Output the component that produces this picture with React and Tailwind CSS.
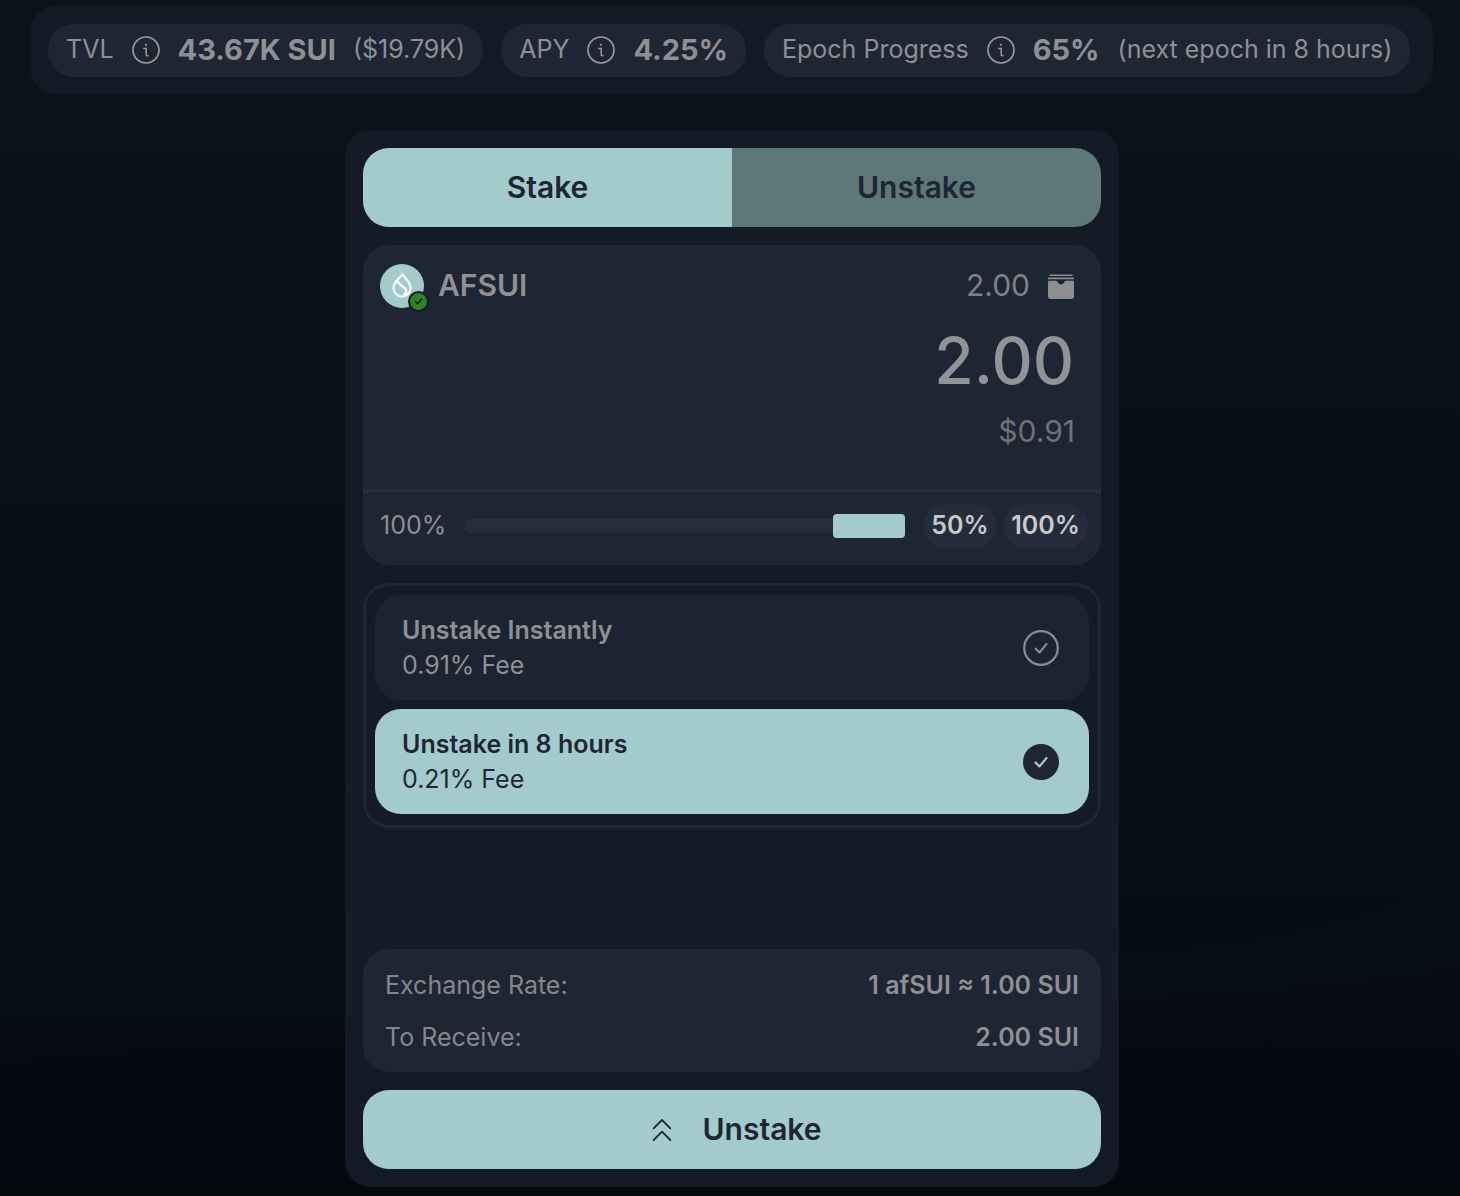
import { ChevronsUp } from 'lucide-react';

const font = { fontFamily: 'Inter, "Liberation Sans", sans-serif' };

function InfoIcon() {
  return (
    <svg width="28" height="28" viewBox="0 0 28 28" fill="none" stroke="#9a9a9c" className="shrink-0">
      <circle cx="14" cy="14" r="13" strokeWidth="1.7" />
      <circle cx="14" cy="8.8" r="1.1" fill="#9a9a9c" stroke="none" />
      <path d="M11.8 12.4h2.4v6.2c0 1 .6 1.4 1.8 1.2" strokeWidth="1.5" strokeLinecap="round" />
    </svg>
  );
}

function Stat({ children }) {
  return (
    <div className="flex h-[53px] items-center gap-[18px] rounded-[26px] bg-[#1f2633] px-[18px] text-[25px] text-[#8f9094]">
      {children}
    </div>
  );
}

function WalletIcon() {
  return (
    <svg width="30" height="28" viewBox="0 0 30 28" fill="none" className="shrink-0">
      <path d="M4 3.2h22" stroke="#8d8e90" strokeWidth="1.6" strokeLinecap="round" />
      <path d="M2.6 6.4h24.8" stroke="#8d8e90" strokeWidth="1.6" strokeLinecap="round" />
      <path
        d="M3.5 8.8h6c1.2 0 1.8.6 2.4 1.6.7 1.2 1.7 2 3.1 2s2.4-.8 3.1-2c.6-1 1.2-1.6 2.4-1.6h6c1 0 1.5.5 1.5 1.5v14.2c0 1.6-1 2.5-2.5 2.5H4.500c-1.500 0-2.500-.9-2.500-2.500V10.300c0-1 .5-1.500 1.500-1.500z"
        fill="#8d8e90"
      />
    </svg>
  );
}

function TokenIcon() {
  return (
    <div className="relative h-[44px] w-[44px] shrink-0 rounded-full bg-[#a4cbcb]">
      <svg width="44" height="44" viewBox="0 0 44 44" fill="none" stroke="#fff" strokeWidth="2.2" className="absolute left-0 top-0">
        <path d="M22.500 10.500c4.500 4.800 8 8.700 8 13.500a8.500 8.500 0 0 1-17 0c0-3 1.600-5.500 3.500-7.700z" />
        <path d="M17.300 17.200c1.500 4 7.200 5 8.700 8.800.5 1.400-.1 3.800-2.300 5.300" />
      </svg>
      <div className="absolute bottom-[-4px] right-[-5px] flex h-[21px] w-[21px] items-center justify-center rounded-full border-2 border-[#141c29] bg-[#2f8324]">
        <svg width="11" height="11" viewBox="0 0 11 11" fill="none" stroke="#10202a" strokeWidth="1.500" strokeLinecap="round" strokeLinejoin="round">
          <path d="M2.500 5.800l2 2 4-4.500" />
        </svg>
      </div>
    </div>
  );
}

function Option({ title, fee, active }) {
  return (
    <div
      className={`flex h-[105px] items-center justify-between rounded-[26px] pl-[27px] pr-[30px] ${
        active ? 'bg-[#a4cbcb] text-[#1e2635]' : 'bg-[#1d2431] text-[#8f9094]'
      }`}
    >
      <div className="flex flex-col gap-[3px]">
        <div className="text-[25px] font-semibold leading-[32px]">{title}</div>
        <div className="text-[25px] leading-[32px]">{fee}</div>
      </div>
      {active ? (
        <svg width="36" height="36" viewBox="0 0 36 36" fill="none">
          <circle cx="18" cy="18" r="18" fill="#1e2635" />
          <path d="M12.500 18.500l4 4 7-8.500" stroke="#a4cbcb" strokeWidth="2.200" strokeLinecap="round" strokeLinejoin="round" />
        </svg>
      ) : (
        <svg width="36" height="36" viewBox="0 0 36 36" fill="none" stroke="#8a8b8f">
          <circle cx="18" cy="18" r="16.800" strokeWidth="2.200" />
          <path d="M12.500 18.500l4 4 7-8.500" strokeWidth="2" strokeLinecap="round" strokeLinejoin="round" />
        </svg>
      )}
    </div>
  );
}

function Background() {
  return (
    <svg width="1460" height="1196" viewBox="0 0 1460 1196" fill="none" className="absolute left-0 top-0">
      <path d="M0 370c160 20 300 20 460 20s700 200 1000 240V1196H0z" fill="#ffffff" fillOpacity="0.006" />
      <path d="M0 738c220 20 480 90 700 150s520 110 760-10V1196H0z" fill="#ffffff" fillOpacity="0.006" />
      <path d="M0 1060c260-30 520-20 760-40s460-10 700-50v226H0z" fill="#000000" fillOpacity="0.12" />
    </svg>
  );
}

export default function App() {
  return (
    <div style={font} className="relative h-[1196px] w-[1460px] overflow-hidden bg-gradient-to-b from-[#0c131c] to-[#03090f]">
      <Background />
      <div className="relative flex flex-col items-center pt-[6px]">
        <div className="ml-[3px] flex h-[88px] w-[1403px] items-center gap-[18px] rounded-[26px] bg-[#131a25] px-[18px]">
          <Stat>
            <span>TVL</span>
            <InfoIcon />
            <span className="text-[29px] font-bold">43.67K SUI</span>
            <span className="-ml-[1px]">($19.79K)</span>
          </Stat>
          <Stat>
            <span>APY</span>
            <InfoIcon />
            <span className="text-[29px] font-bold">4.25%</span>
          </Stat>
          <Stat>
            <span>Epoch Progress</span>
            <InfoIcon />
            <span className="text-[29px] font-bold">65%</span>
            <span>(next epoch in 8 hours)</span>
          </Stat>
        </div>

        <div className="ml-[4px] mt-[36px] flex w-[774px] flex-col rounded-[26px] bg-[#141a26] p-[18px]">
          <div className="flex h-[79px] overflow-hidden rounded-[26px] text-[30px] font-semibold text-[#1e2635]">
            <div className="flex w-[369px] items-center justify-center bg-[#a4cbcb]">Stake</div>
            <div className="flex flex-1 items-center justify-center bg-[#5e7777]">Unstake</div>
          </div>

          <div className="mt-[18px] h-[320px] rounded-[26px] bg-[#1e2533]">
            <div className="flex h-[248px] flex-col border-b-[4px] border-[#252e3e] px-[17px] pt-[18px]">
              <div className="flex items-center justify-between pr-[8px]">
                <div className="flex items-center gap-[14px]">
                  <TokenIcon />
                  <span className="text-[30px] font-semibold text-[#909194]">AFSUI</span>
                </div>
                <div className="flex items-center gap-[16px] text-[30px] text-[#808185]">
                  <span>2.00</span>
                  <WalletIcon />
                </div>
              </div>
              <div className="mt-[14px] pr-[10px] text-right text-[64px] font-medium leading-[78px] text-[#929396]">2.00</div>
              <div className="mt-[13px] pr-[9px] text-right text-[30px] leading-[36px] text-[#717276]">$0.91</div>
            </div>
            <div className="flex h-[68px] items-center pb-[2px] pl-[17px] pr-[13px]">
              <span className="w-[84px] text-[25px] text-[#8f9094]">100%</span>
              <div className="relative h-[14px] w-[441px] rounded-full bg-[#252e3e]">
                <div className="absolute right-0 top-[-5px] h-[24px] w-[72px] rounded-[4px] bg-[#a4cbcb]" />
              </div>
              <div className="ml-[18px] flex h-[44px] w-[50px] flex-1 items-center justify-center rounded-[22px] bg-[#252d3c] text-[25px] font-semibold text-[#c9c9ca]">50%</div>
              <div className="ml-[6px] flex h-[44px] w-[85px] items-center justify-center rounded-[22px] bg-[#252d3c] text-[25px] font-semibold text-[#c9c9ca]">100%</div>
            </div>
          </div>

          <div className="mt-[18px] flex h-[245px] flex-col gap-[9px] rounded-[26px] border-[3px] border-[#1e2533] p-[9px]">
            <Option title="Unstake Instantly" fee="0.91% Fee" />
            <Option title="Unstake in 8 hours" fee="0.21% Fee" active />
          </div>

          <div className="mt-[121px] flex h-[123px] flex-col justify-center gap-[20px] rounded-[26px] bg-[#1e2533] px-[22px] text-[25px] leading-[32px]">
            <div className="flex items-center justify-between">
              <span className="text-[#86878b]">Exchange Rate:</span>
              <span className="font-semibold text-[#8f9094]">1 afSUI ≈ 1.00 SUI</span>
            </div>
            <div className="flex items-center justify-between">
              <span className="text-[#86878b]">To Receive:</span>
              <span className="font-semibold text-[#8f9094]">2.00 SUI</span>
            </div>
          </div>

          <div className="mt-[18px] flex h-[79px] items-center justify-center gap-[20px] rounded-[26px] bg-[#a4cbcb] text-[30px] font-semibold text-[#1e2635]">
            <ChevronsUp size={40} strokeWidth={1.8} absoluteStrokeWidth />
            <span>Unstake</span>
          </div>
        </div>
      </div>
    </div>
  );
}
